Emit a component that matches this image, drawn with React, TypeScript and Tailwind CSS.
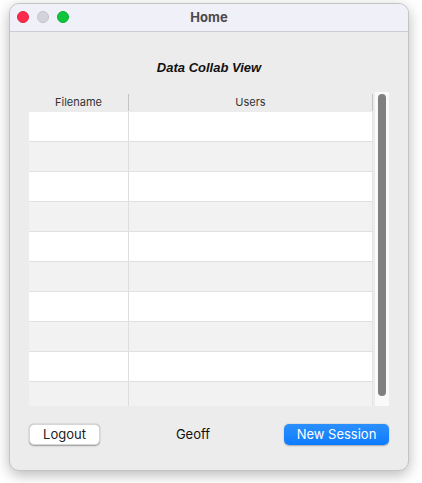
import React from "react";

const font = { fontFamily: "Inter, 'Liberation Sans', sans-serif" };

export default function App() {
  const rows = Array.from({ length: 10 }, (_, i) => i);
  return (
    <div className="w-[422px] h-[483px] bg-white pl-[9px] pt-[3px]" style={font}>
      <div className="w-[400px] h-[468px] rounded-[10px] bg-[#ececec] border border-[#c4c4c4] shadow-[0_4px_14px_rgba(0,0,0,0.28)] overflow-hidden flex flex-col">
        {/* Title bar */}
        <div className="h-[28px] shrink-0 bg-[#f0f0f8] border-b border-[#cdcdd2] relative flex items-center justify-center">
          <div className="absolute left-[7px] top-[7px] flex gap-[8px]">
            <div className="w-[12px] h-[12px] rounded-full bg-[#fe2a4e] border border-[#e0233f]" />
            <div className="w-[12px] h-[12px] rounded-full bg-[#d3d3da] border border-[#c2c2ca]" />
            <div className="w-[12px] h-[12px] rounded-full bg-[#0ec63c] border border-[#0bb032]" />
          </div>
          <span className="text-[13px] font-bold text-[#4a4a4a] leading-none">Home</span>
        </div>

        {/* Content */}
        <div className="flex-1 flex flex-col px-[19px]">
          <div
            className="pt-[28px] pb-[16px] text-center text-[13px] leading-[16px] font-bold italic text-[#111]"
            style={{ fontFamily: "'Liberation Sans', Arial, sans-serif" }}
          >
            Data Collab View
          </div>

          <div className="h-[314px] flex">
            {/* Table */}
            <div className="w-[344px] flex flex-col overflow-hidden">
              <div className="h-[20px] shrink-0 flex text-[11px] text-[#333] items-center">
                <div className="w-[99px] text-center">Filename</div>
                <div className="w-px h-[17px] bg-[#c4c4c4]" />
                <div className="flex-1 text-center">Users</div>
                <div className="w-px h-[17px] bg-[#c4c4c4]" />
              </div>
              <div className="flex-1 overflow-hidden flex flex-col">
                {rows.map((i) => (
                  <div
                    key={i}
                    className={`h-[30px] shrink-0 flex border-b border-[#e0e0e0] ${
                      i % 2 === 0 ? "bg-white" : "bg-[#f1f2f1]"
                    }`}
                  >
                    <div className="w-[100px] border-r border-[#dedede]" />
                    <div className="flex-1 border-r border-[#e4e4e4]" />
                  </div>
                ))}
              </div>
            </div>
            {/* Scrollbar */}
            <div className="w-[16px] flex pl-[2px]">
              <div className="w-[14px] h-full bg-[#fafafa] pt-[2px] pb-[10px] flex justify-center">
                <div className="w-[8px] h-full rounded-full bg-[#808080]" />
              </div>
            </div>
          </div>

          {/* Bottom bar */}
          <div className="mt-[18px] flex items-center justify-between">
            <button className="w-[71px] h-[21px] rounded-[5px] bg-white text-[13px] text-[#222] leading-none shadow-[0_0.5px_1.5px_rgba(0,0,0,0.35)] border border-[#d6d6d6]">
              Logout
            </button>
            <span className="text-[13px] text-[#111] ml-[2px]">Geoff</span>
            <button className="w-[105px] h-[21px] rounded-[5px] bg-gradient-to-b from-[#2b8ffd] to-[#0a7cff] text-[13px] text-white leading-none shadow-[0_0.5px_1.5px_rgba(0,0,0,0.3)]">
              New Session
            </button>
          </div>
        </div>
      </div>
    </div>
  );
}
